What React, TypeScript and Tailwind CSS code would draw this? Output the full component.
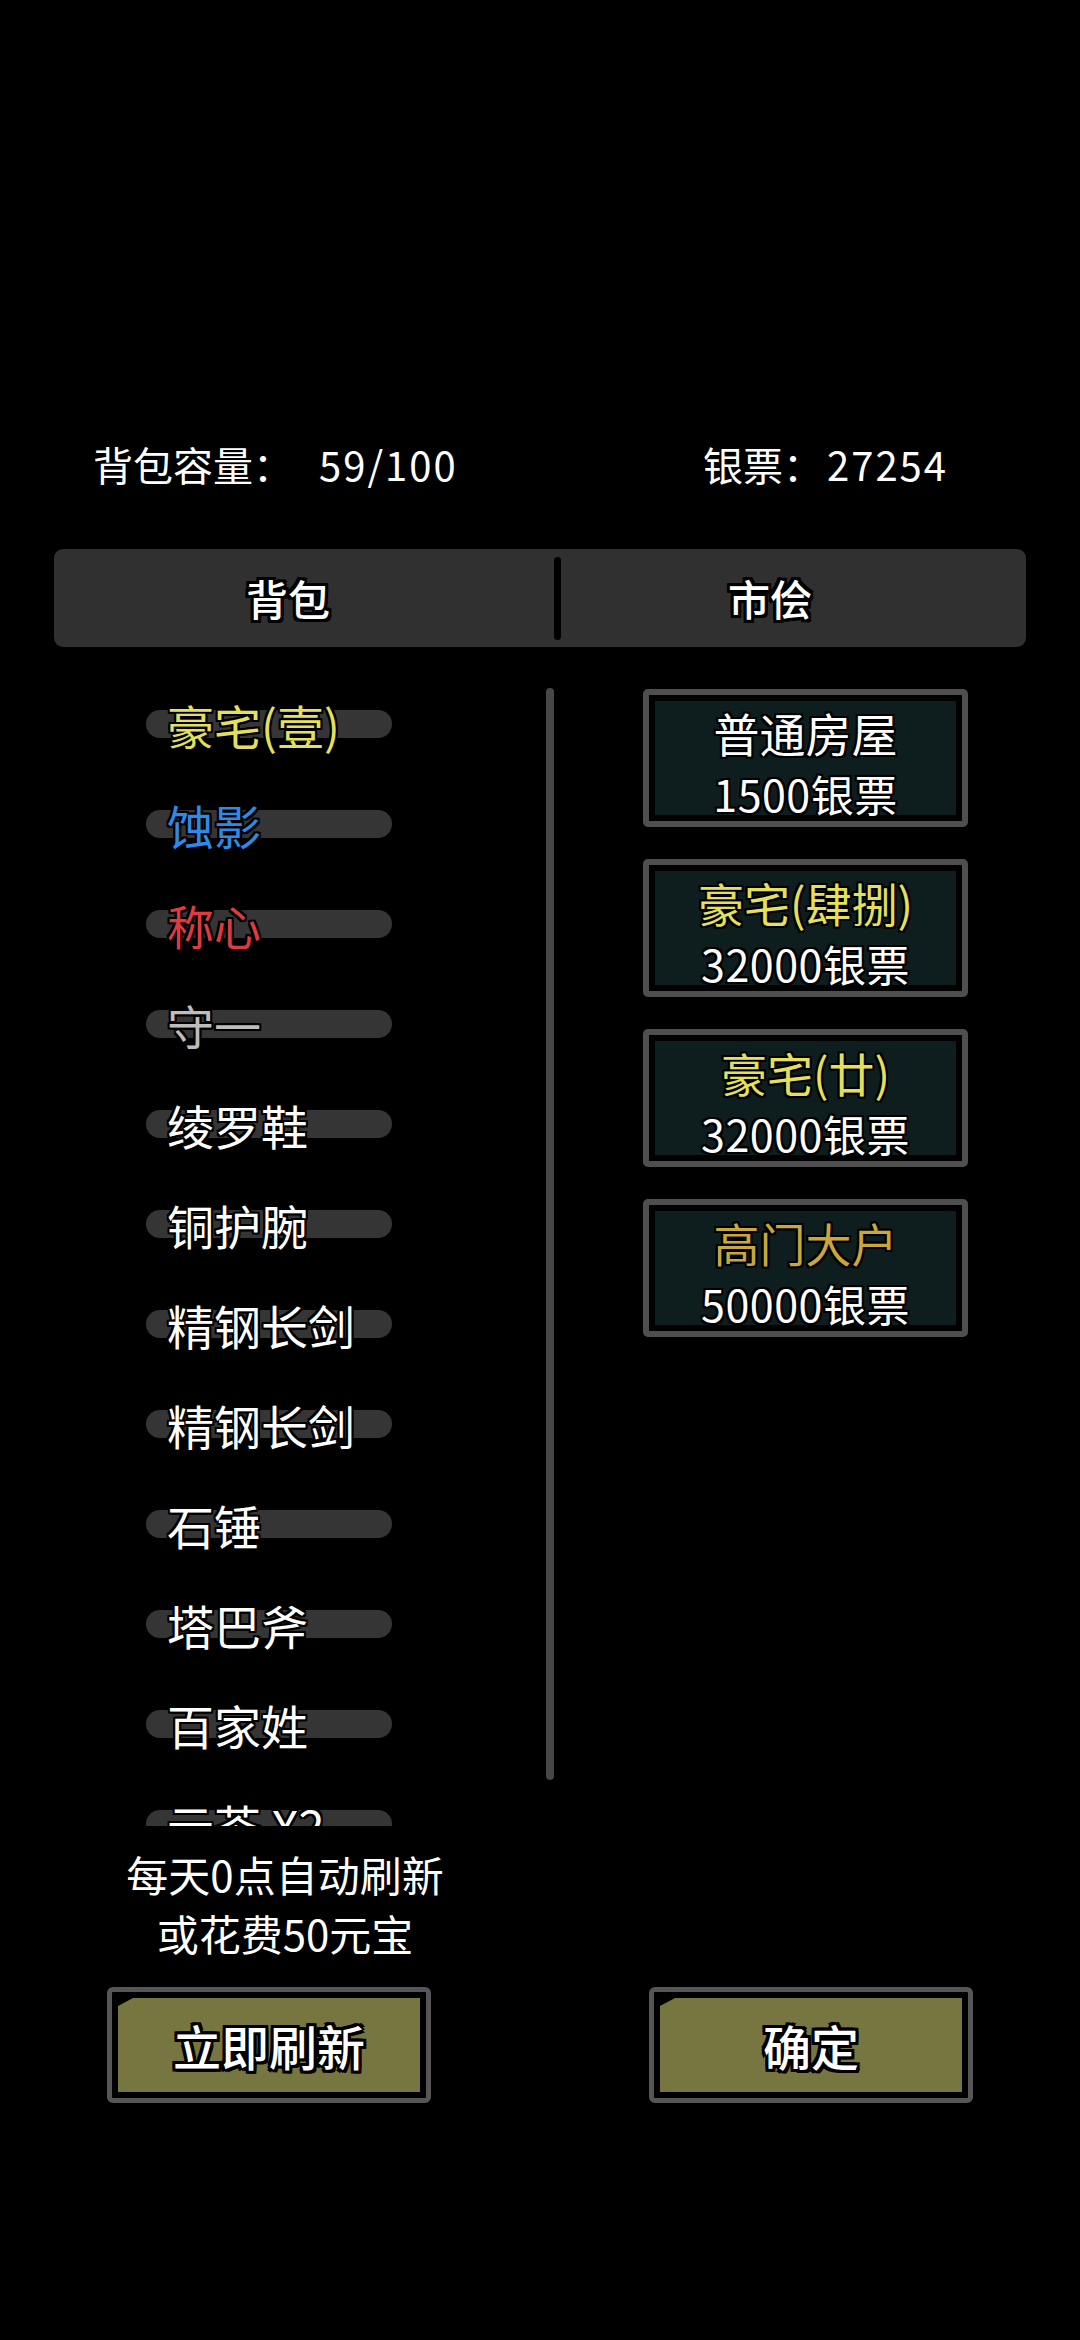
import React from 'react'

const outline =
  '[text-shadow:-2px_-2px_0_#000,0_-2px_0_#000,2px_-2px_0_#000,2px_0_0_#000,2px_2px_0_#000,0_2px_0_#000,-2px_2px_0_#000,-2px_0_0_#000]'
const outlineThick =
  '[text-shadow:-3px_-3px_0_#000,0_-3px_0_#000,3px_-3px_0_#000,3px_0_0_#000,3px_3px_0_#000,0_3px_0_#000,-3px_3px_0_#000,-3px_0_0_#000,-2px_-3px_0_#000,2px_3px_0_#000]'

const bagItems = [
  { name: '豪宅(壹)', color: 'text-[#e4e05c]' },
  { name: '蚀影', color: 'text-[#2e8ae6]' },
  { name: '称心', color: 'text-[#df3a40]' },
  { name: '守一', color: 'text-[#bdbdbd]' },
  { name: '绫罗鞋', color: 'text-white' },
  { name: '铜护腕', color: 'text-white' },
  { name: '精钢长剑', color: 'text-white' },
  { name: '精钢长剑', color: 'text-white' },
  { name: '石锤', color: 'text-white' },
  { name: '塔巴斧', color: 'text-white' },
  { name: '百家姓', color: 'text-white' },
  { name: '云苓 X2', color: 'text-white' },
]

const shopItems = [
  { name: '普通房屋', price: '1500银票', color: 'text-white' },
  { name: '豪宅(肆捌)', price: '32000银票', color: 'text-[#e4e05c]' },
  { name: '豪宅(廿)', price: '32000银票', color: 'text-[#e4e05c]' },
  { name: '高门大户', price: '50000银票', color: 'text-[#c9a73c]' },
]

function BagRow({ name, color }: { name: string; color: string }) {
  return (
    <div className="grid h-[100px] shrink-0 items-center">
      <div className="col-start-1 row-start-1 ml-[92px] h-[28px] w-[246px] rounded-full bg-[#353535]" />
      <div className={`col-start-1 row-start-1 ml-[113px] text-[47px] leading-none ${color} ${outline}`}>
        {name}
      </div>
    </div>
  )
}

function ShopCard({ name, price, color }: { name: string; price: string; color: string }) {
  return (
    <div className="h-[138px] w-[325px] rounded-[5px] border-[6px] border-[#4f4f4f] bg-black p-[6px]">
      <div className="flex h-[114px] flex-col items-center bg-[#0e1d1d] pt-[9px]">
        <div className={`h-[44px] text-[46px] leading-[44px] ${color} ${outline}`}>{name}</div>
        <div className={`mt-[19px] h-[40px] text-[43px] leading-[40px] tracking-[0.5px] text-white ${outline}`}>{price}</div>
      </div>
    </div>
  )
}

function OliveButton({ label, className }: { label: string; className: string }) {
  return (
    <div className={`h-[116px] w-[324px] rounded-[6px] border-[5px] border-[#565656] bg-black p-[6px] ${className}`}>
      <div className="flex h-full w-full items-center justify-center bg-[#777540] [clip-path:polygon(15px_0,100%_0,100%_100%,0_100%,0_8px)]">
        <span className={`text-[48px] font-medium leading-none text-white ${outlineThick}`}>{label}</span>
      </div>
    </div>
  )
}

export default function App() {
  return (
    <div className="h-[2340px] w-[1080px] overflow-hidden bg-black font-['Noto_Sans_CJK_SC','Noto_Sans',sans-serif] text-white">
      <div className="h-[444px]" />

      {/* capacity / silver */}
      <div className="flex h-[40px] items-center text-[40px] leading-none">
        <div className="ml-[93px] flex w-[610px]">
          <span>背包容量：</span>
          <span className="ml-[26px] tracking-[2px]">59/100</span>
        </div>
        <div className="flex">
          <span>银票：</span>
          <span className="ml-[4px] tracking-[2px]">27254</span>
        </div>
      </div>

      {/* tabs */}
      <div className="mx-[54px] mt-[65px] flex h-[98px] items-center rounded-[9px] bg-[#303030]">
        <div className={`flex w-[500px] justify-center pr-[32px] text-[42px] font-medium leading-none ${outlineThick}`}>背包</div>
        <div className="h-[83px] w-[7px] rounded-full bg-black" />
        <div className={`flex flex-1 justify-center pr-[47px] text-[42px] font-medium leading-none ${outlineThick}`}>市侩</div>
      </div>

      {/* lists */}
      <div className="mt-[27px] flex h-[1152px]">
        <div className="ml-[54px] flex h-[1152px] w-[492px] flex-col overflow-hidden">
          {bagItems.map((item, i) => (
            <BagRow key={i} name={item.name} color={item.color} />
          ))}
        </div>
        <div className="mt-[14px] h-[1092px] w-[8px] rounded-full bg-[#474747]" />
        <div className="ml-[89px] flex flex-col gap-[32px] pt-[15px]">
          {shopItems.map((item, i) => (
            <ShopCard key={i} name={item.name} price={item.price} color={item.color} />
          ))}
        </div>
      </div>

      {/* refresh note */}
      <div className="ml-[54px] mt-[18px] w-[462px] text-center text-[42px] leading-[59px]">
        <div>每天0点自动刷新</div>
        <div>或花费50元宝</div>
      </div>

      {/* buttons */}
      <div className="mt-[25px] flex">
        <OliveButton label="立即刷新" className="ml-[107px]" />
        <OliveButton label="确定" className="ml-[218px]" />
      </div>
    </div>
  )
}
